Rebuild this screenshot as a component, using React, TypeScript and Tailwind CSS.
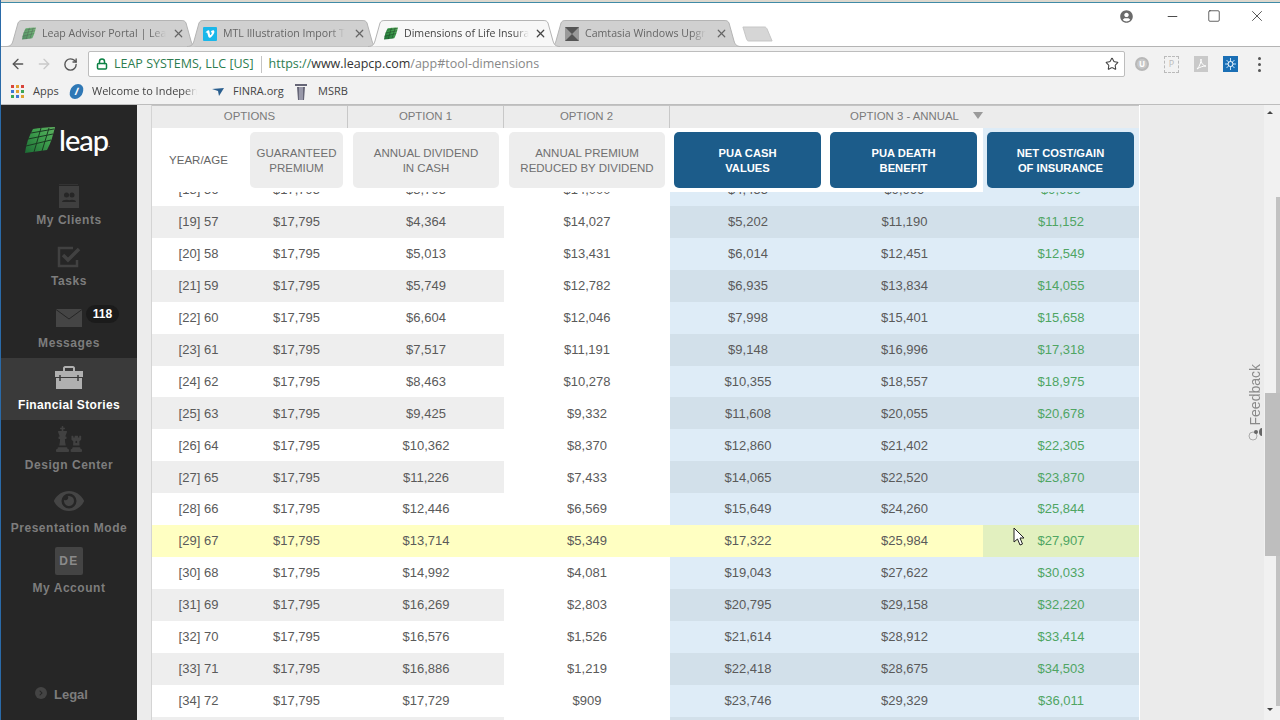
import React from "react";
import { ArrowLeft, ArrowRight, RotateCw, Star, Lock, Minus, Square, X } from "lucide-react";
import { FaChess, FaEye, FaVimeoV, FaChevronRight, FaUserCircle } from "react-icons/fa";

const rows = [
  ["[18] 56", "$17,795", "$3,795", "$14,000", "$4,455", "$9,999", "$9,999"],
  ["[19] 57", "$17,795", "$4,364", "$14,027", "$5,202", "$11,190", "$11,152"],
  ["[20] 58", "$17,795", "$5,013", "$13,431", "$6,014", "$12,451", "$12,549"],
  ["[21] 59", "$17,795", "$5,749", "$12,782", "$6,935", "$13,834", "$14,055"],
  ["[22] 60", "$17,795", "$6,604", "$12,046", "$7,998", "$15,401", "$15,658"],
  ["[23] 61", "$17,795", "$7,517", "$11,191", "$9,148", "$16,996", "$17,318"],
  ["[24] 62", "$17,795", "$8,463", "$10,278", "$10,355", "$18,557", "$18,975"],
  ["[25] 63", "$17,795", "$9,425", "$9,332", "$11,608", "$20,055", "$20,678"],
  ["[26] 64", "$17,795", "$10,362", "$8,370", "$12,860", "$21,402", "$22,305"],
  ["[27] 65", "$17,795", "$11,226", "$7,433", "$14,065", "$22,520", "$23,870"],
  ["[28] 66", "$17,795", "$12,446", "$6,569", "$15,649", "$24,260", "$25,844"],
  ["[29] 67", "$17,795", "$13,714", "$5,349", "$17,322", "$25,984", "$27,907"],
  ["[30] 68", "$17,795", "$14,992", "$4,081", "$19,043", "$27,622", "$30,033"],
  ["[31] 69", "$17,795", "$16,269", "$2,803", "$20,795", "$29,158", "$32,220"],
  ["[32] 70", "$17,795", "$16,576", "$1,526", "$21,614", "$28,912", "$33,414"],
  ["[33] 71", "$17,795", "$16,886", "$1,219", "$22,418", "$28,675", "$34,503"],
  ["[34] 72", "$17,795", "$17,729", "$909", "$23,746", "$29,329", "$36,011"],
  ["", "", "", "", "", "", ""],
];

const columns = "grid grid-cols-[93px_103px_156px_166px_156px_157px_156px]";

// green leaf mark used by the logo and the tab favicons
const Leaf = ({ className }: { className: string }) => (
  <svg viewBox="0 0 30 26" className={className}>
    <defs>
      <linearGradient id="leaf" x1="0" y1="1" x2="1" y2="0">
        <stop offset="0" stopColor="#1c6b34" />
        <stop offset="0.6" stopColor="#3fa04e" />
        <stop offset="1" stopColor="#5fb060" />
      </linearGradient>
    </defs>
    <path d="M8 2 C14 1 22 0 30 0 C28 8 26 16 22 23 C15 24 7 25 0 26 C1 17 4 9 8 2Z" fill="url(#leaf)" />
    <path d="M1 19 L26 13 M3 12 L28 7 M6 6 L29 2 M9 25 L16 1 M17 24 L24 1" stroke="#1a3a22" strokeWidth="1" fill="none" />
  </svg>
);

const CamtasiaIcon = () => (
  <svg viewBox="0 0 14 14" className="w-[14px] h-[14px] shrink-0">
    <rect width="14" height="14" fill="#555" />
    <path d="M0 0 L7 7 L0 14Z M14 0 L7 7 L14 14Z" fill="#999" />
  </svg>
);

const tabs = [
  { title: "Leap Advisor Portal | Lea", icon: <Leaf className="w-[14px] h-[13px] shrink-0 opacity-70" /> },
  {
    title: "MTL Illustration Import T",
    icon: (
      <span className="w-[14px] h-[14px] shrink-0 bg-[#1ab7ea] rounded-[1px] flex items-center justify-center text-white">
        <FaVimeoV size={10} />
      </span>
    ),
  },
  { title: "Dimensions of Life Insura", icon: <Leaf className="w-[14px] h-[13px] shrink-0" />, active: true },
  { title: "Camtasia Windows Upgr", icon: <CamtasiaIcon /> },
];

const ChromeTab = ({ title, icon, active }: { title: string; icon: React.ReactNode; active?: boolean }) => (
  <div className={`relative w-[192px] h-[27px] -mr-[11px] -mb-px flex items-center pl-[16px] pr-[13px] pt-[1px] ${active ? "z-10" : ""}`}>
    <svg viewBox="0 0 192 27" className="absolute inset-0 w-full h-full" preserveAspectRatio="none">
      <path
        d="M0 26.5 C5 26.5 6 24 7 21 L12 3 C13 1 14 .5 17 .5 L175 .5 C178 .5 179 1 180 3 L185 21 C186 24 187 26.5 192 26.5"
        fill={active ? "#f7f7f7" : "#d0d0d0"}
        stroke="#b4b4b4"
      />
    </svg>
    <div className="relative flex items-center w-full">
      {icon}
      <span
        className={`ml-[6px] whitespace-nowrap text-[10.6px] [mask-image:linear-gradient(to_right,black_88%,transparent)] ${
          active ? "text-[#444]" : "text-[#666]"
        }`}
      >
        {title}
      </span>
      <X size={13} strokeWidth={2.2} className={`ml-auto shrink-0 ${active ? "text-[#444]" : "text-[#666]"}`} />
    </div>
  </div>
);

const TabStrip = () => (
  <div className="h-[44px] bg-white border-b border-[#b4b4b4] flex justify-between pl-[5px] pr-[14px]">
    <div className="flex items-end">
      {tabs.map((t) => (
        <ChromeTab key={t.title} {...t} />
      ))}
      <svg viewBox="0 0 34 16" className="ml-[12px] mb-[4px] w-[31px] h-[16px]" preserveAspectRatio="none">
        <path d="M1 1 L25 1 C26 1 27 2 27.500 3 L33 15 L7 15 C6 15 5.500 14 5 13Z" fill="#d6d6d6" stroke="#c4c4c4" />
      </svg>
    </div>
    <div className="flex items-start pt-[5px] text-[#555]">
      <FaUserCircle size={13} className="mt-[2px] text-[#6a6a6a]" />
      <Minus size={15} strokeWidth={1.3} className="ml-[32px] mt-[1px] text-[#222]" />
      <Square size={14} strokeWidth={1.2} className="ml-[27px] mt-[1px] text-[#222]" />
      <X size={18} strokeWidth={1} className="ml-[27px] -mt-px text-[#222]" />
    </div>
  </div>
);

const Toolbar = () => (
  <div className="h-[33px] bg-[#f2f2f2] flex items-center pl-[9px] pr-[10px] pt-[1px] text-[#555]">
    <ArrowLeft size={16} strokeWidth={2} className="text-[#555]" />
    <ArrowRight size={16} strokeWidth={2} className="ml-[10px] text-[#c9c9c9]" />
    <RotateCw size={15} strokeWidth={2.2} className="ml-[11px] text-[#555]" />
    <div className="ml-[10px] w-[1037px] h-[26px] bg-white border border-[#bdbdbd] rounded-[2px] flex items-center pl-[7px] pr-[5px] text-[12.5px]">
      <Lock size={12} strokeWidth={3} className="text-[#0b8043]" />
      <span className="ml-[6px] text-[#2e7d4f]">LEAP SYSTEMS, LLC [US]</span>
      <span className="mx-[7px] w-px h-[17px] bg-[#c4c4c4]" />
      <span className="text-[#2e7d4f]">https://</span>
      <span className="text-[#333]">www.leapcp.com</span>
      <span className="text-[#888]">/app#tool-dimensions</span>
      <Star size={14} strokeWidth={1.8} className="ml-auto text-[#444]" />
    </div>
    <span className="ml-[10px] w-[14px] h-[14px] rounded-full bg-[#c8c8c8] border-[2px] border-[#b8b8b8] text-white text-[8px] font-bold flex items-center justify-center">
      U
    </span>
    <span className="ml-[15px] w-[15px] h-[17px] border border-dashed border-[#bbb] text-[#bbb] text-[9px] flex items-center justify-center">
      P
    </span>
    <svg viewBox="0 0 14 16" className="ml-[15px] w-[14px] h-[16px]">
      <rect width="14" height="16" fill="#c9c9c9" />
      <path d="M3 13 C6 10 7 6 7 3 C7 7 9 10 12 10 C9 10 6 11 3 13Z" fill="none" stroke="#fff" />
    </svg>
    <svg viewBox="0 0 15 16" className="ml-[15px] w-[15px] h-[16px]">
      <rect width="15" height="16" fill="#1a6fb5" />
      <g stroke="#bfe3ff" strokeWidth="1">
        <path d="M7.500 2 V14 M2 8 H13 M3.500 4 L11.500 12 M11.500 4 L3.500 12" />
      </g>
      <circle cx="7.500" cy="8" r="2.500" fill="#1a6fb5" stroke="#fff" />
    </svg>
    <div className="ml-[20px] flex flex-col gap-[3px]">
      <span className="w-[3px] h-[3px] rounded-full bg-[#555]" />
      <span className="w-[3px] h-[3px] rounded-full bg-[#555]" />
      <span className="w-[3px] h-[3px] rounded-full bg-[#555]" />
    </div>
  </div>
);

const AppsIcon = () => (
  <div className="grid grid-cols-3 gap-[2px] w-[13px]">
    {["bg-[#d9453a]", "bg-[#e0a030]", "bg-[#d9453a]", "bg-[#3c78d8]", "bg-[#e0a030]", "bg-[#3aa757]", "bg-[#3aa757]", "bg-[#3c78d8]", "bg-[#e0a030]"].map((c, i) => (
      <span key={i} className={`w-[3px] h-[3px] ${c}`} />
    ))}
  </div>
);

const Bookmarks = () => (
  <div className="h-[25px] bg-[#f2f2f2] border-b border-[#bdbdbd] flex items-center pl-[10px] pb-[1px] text-[11px] text-[#444]">
    <AppsIcon />
    <span className="ml-[9px] w-[25px]">Apps</span>
    <span className="ml-[12px] w-[13px] h-[15px] rounded-full bg-[#2f78b5] text-white text-[10px] italic font-bold flex items-center justify-center -skew-x-12">
      I
    </span>
    <span className="ml-[9px] w-[105px] whitespace-nowrap [mask-image:linear-gradient(to_right,black_88%,transparent)]">
      Welcome to Indepen
    </span>
    <svg viewBox="0 0 12 8" className="ml-[15px] w-[12px] h-[8px]">
      <path d="M0 1 L12 0 L7 8 L6 3Z" fill="#2a5f8f" />
    </svg>
    <span className="ml-[9px] w-[50px] whitespace-nowrap">FINRA.org</span>
    <svg viewBox="0 0 12 16" className="ml-[12px] w-[12px] h-[16px]">
      <path d="M0 0 H12 V2 H0Z M2 3 H10 L9 16 H3Z" fill="#667" />
      <path d="M5 3 V16 M7 3 V16" stroke="#ccd" />
    </svg>
    <span className="ml-[11px]">MSRB</span>
  </div>
);

const ClientsIcon = () => (
  <svg viewBox="0 0 22 24" className="w-[22px] h-[24px]">
    <path d="M1 0 H20 V1 H1Z" fill="#333" />
    <rect x="1" y="2" width="20" height="22" fill="#3f3f3f" />
    <circle cx="8.500" cy="11" r="2.500" fill="#262626" />
    <circle cx="14" cy="11" r="2.500" fill="#262626" />
    <path d="M4 18 C4 15 13 15 13 18Z M10 18 C10 15 18 15 18 18Z" fill="#262626" />
  </svg>
);

const TasksIcon = () => (
  <svg viewBox="0 0 24 22" className="w-[24px] h-[22px]" fill="none" stroke="#414141">
    <path d="M20 14 V20 H2 V2 H16" strokeWidth="2.500" />
    <path d="M6 9 L11 14 L22 3" strokeWidth="3.500" />
  </svg>
);

const MailIcon = () => (
  <svg viewBox="0 0 26 18" className="w-[26px] h-[18px]">
    <rect width="26" height="18" fill="#454545" />
    <path d="M0 .5 L13 10 L26 .5" fill="none" stroke="#262626" />
  </svg>
);

const BriefcaseIcon = () => (
  <svg viewBox="0 0 30 23" className="w-[30px] h-[23px]">
    <path d="M9 5 V2 C9 1 10 0 11 0 H19 C20 0 21 1 21 2 V5 H19 V2 H11 V5Z" fill="#b0b0b0" />
    <path d="M1 5 H29 V11 H1Z M2 12 H28 V23 H2Z" fill="#b0b0b0" />
    <path d="M6 9 V15 M24 9 V15" stroke="#3a3a3a" strokeWidth="1.500" />
  </svg>
);

const navItems: { label: string; icon: React.ReactNode; height: string; iconBox: string; active?: boolean; badge?: string }[] = [
  { label: "My Clients", icon: <ClientsIcon />, height: "h-[61px]", iconBox: "h-[39px] pt-[6px]" },
  { label: "Tasks", icon: <TasksIcon />, height: "h-[62px]", iconBox: "h-[39px] pt-[6px]" },
  { label: "Messages", icon: <MailIcon />, height: "h-[62px]", iconBox: "h-[39px] pt-[4px]", badge: "118" },
  { label: "Financial Stories", icon: <BriefcaseIcon />, height: "h-[62px]", iconBox: "h-[39px]", active: true },
  { label: "Design Center", icon: <FaChess size={26} className="text-[#414141]" />, height: "h-[61px]", iconBox: "h-[37px]" },
  { label: "Presentation Mode", icon: <FaEye size={30} className="text-[#454545]" />, height: "h-[60px]", iconBox: "h-[39px]" },
  {
    label: "My Account",
    icon: (
      <span className="w-[28px] h-[28px] rounded-[2px] bg-[#444] text-[#8a8a8a] text-[12px] font-bold tracking-[1.5px] flex items-center justify-center">
        DE
      </span>
    ),
    height: "h-[60px]",
    iconBox: "h-[39px]",
  },
];

const Sidebar = () => (
  <aside className="w-[136px] shrink-0 bg-[#262626] flex flex-col">
    <div className="h-[68px] pt-[22px] pl-[24px] flex items-start">
      <Leaf className="w-[30px] h-[26px]" />
      <span className="ml-[4px] -mt-[9px] text-white text-[29px] font-medium font-['Lato',sans-serif] tracking-[-1px]">leap</span>
      <span className="text-white text-[8px] mt-[12px]">.</span>
    </div>
    {navItems.map((n) => (
      <div key={n.label} className={`relative ${n.height} flex flex-col items-center ${n.active ? "bg-[#3a3a3a]" : ""}`}>
        <div className={`${n.iconBox} flex items-center justify-center`}>{n.icon}</div>
        <span
          className={`text-[12px] leading-[16px] font-bold whitespace-nowrap ${
            n.active ? "text-white tracking-[0.35px]" : "text-[#7d7d7d] tracking-[0.55px]"
          }`}
        >
          {n.label}
        </span>
        {n.badge && (
          <span className="absolute left-[85px] top-[9px] w-[33px] h-[18px] rounded-full bg-[#1b1b1b] text-white text-[12px] font-bold flex items-center justify-center">
            {n.badge}
          </span>
        )}
      </div>
    ))}
    <div className="mt-auto h-[34px] pl-[34px] flex items-start">
      <span className="mt-[1px] w-[12px] h-[12px] rounded-full bg-[#444] text-[#262626] flex items-center justify-center">
        <FaChevronRight size={6} />
      </span>
      <span className="ml-[7px] -mt-px text-[13px] font-bold text-[#7d7d7d]">Legal</span>
    </div>
  </aside>
);

const GroupHeader = () => (
  <div className={`${columns} h-[23px] bg-[#ececec] border-t border-[#c4c4c4] text-[11.4px] text-[#7a7a7a]`}>
    <div className="col-span-2 flex items-center justify-center border-r border-[#c8c8c8] pb-[1px]">OPTIONS</div>
    <div className="flex items-center justify-center border-r border-[#c8c8c8] pb-[1px]">OPTION 1</div>
    <div className="flex items-center justify-center border-r border-[#c8c8c8] pb-[1px]">OPTION 2</div>
    <div className="col-span-3 flex items-center justify-center pb-[1px]">
      <span className="relative">
        OPTION 3 - ANNUAL
        <svg viewBox="0 0 10 7" className="absolute left-[123px] top-[4px] w-[10px] h-[7px]">
          <path d="M0 0 H10 L5 7Z" fill="#9a9a9a" />
        </svg>
      </span>
    </div>
  </div>
);

const grayHead = "mx-[5px] h-[56px] pt-[2px] bg-[#ededed] rounded-[5px] flex items-center justify-center text-center text-[11.5px] leading-[15px] text-[#707070]";
const blueHead = "h-[56px] pt-[2px] bg-[#1c5c8a] rounded-[5px] flex items-center justify-center text-center text-[11.2px] leading-[15px] font-bold text-white";

const SubHeader = () => (
  <div className={`${columns} h-[64px] bg-white`}>
    <div className="flex items-center justify-center pt-[2px] text-[11.5px] text-[#666]">YEAR/AGE</div>
    <div className="pt-[4px]">
      <div className={grayHead}>
        GUARANTEED
        <br />
        PREMIUM
      </div>
    </div>
    <div className="pt-[4px]">
      <div className={grayHead}>
        ANNUAL DIVIDEND
        <br />
        IN CASH
      </div>
    </div>
    <div className="pt-[4px]">
      <div className={grayHead}>
        ANNUAL PREMIUM
        <br />
        REDUCED BY DIVIDEND
      </div>
    </div>
    <div className="pt-[4px] pl-[4px] pr-[5px]">
      <div className={blueHead}>
        PUA CASH
        <br />
        VALUES
      </div>
    </div>
    <div className="pt-[4px] pl-[4px] pr-[6px]">
      <div className={blueHead}>
        PUA DEATH
        <br />
        BENEFIT
      </div>
    </div>
    <div className="pt-[4px] pl-[4px] pr-[5px] bg-[#deecf7]">
      <div className={blueHead}>
        NET COST/GAIN
        <br />
        OF INSURANCE
      </div>
    </div>
  </div>
);

const cellBg = (row: number, col: number) => {
  if (row === 11) return col === 6 ? "bg-[#e2f0bf]" : "bg-[#ffffc2]";
  const striped = row % 2 === 1;
  if (col < 3) return striped ? "bg-[#eeeeee]" : "bg-white";
  if (col === 3) return "bg-white";
  return striped ? "bg-[#d2e0ea]" : "bg-[#deecf7]";
};

const TableBody = () => (
  <div className="flex-1 overflow-hidden">
    <div className="-mt-[18px] text-[13px] text-[#5a5a5a]">
      {rows.map((r, i) => (
        <div key={i} className={`${columns} h-[31.93px]`}>
          {r.map((v, c) => (
            <div key={c} className={`flex items-center justify-center ${cellBg(i, c)} ${c === 6 ? "text-[#4fa563]" : ""}`}>
              {v}
            </div>
          ))}
        </div>
      ))}
    </div>
  </div>
);

const FeedbackTab = () => (
  <div className="flex-1 min-w-0 bg-[#ebebeb] border-l border-white flex justify-end pr-[1px]">
    <div className="mt-[259px] h-[82px] flex flex-col items-center">
      <span className="[writing-mode:vertical-rl] rotate-180 text-[14px] leading-[16px] text-[#8a8a8a]">Feedback</span>
      <svg viewBox="0 0 14 14" className="mt-[3px] w-[14px] h-[14px] -rotate-90">
        <circle cx="6" cy="5" r="4" fill="none" stroke="#aaa" />
        <circle cx="10" cy="8" r="2" fill="#666" />
        <path d="M6 14 C6 10 14 10 14 14Z" fill="#666" />
      </svg>
    </div>
  </div>
);

const PageScrollbar = () => (
  <div className="relative w-[16px] shrink-0 bg-[#f1f1f1] flex justify-end">
    <span className="absolute left-[3px] top-[6px] w-0 h-0 border-x-[3px] border-x-transparent border-b-[3px] border-b-[#444]" />
    <span className="absolute right-0 top-[92px] w-[4px] h-[509px] bg-[#c2c2c2]" />
    <span className="absolute left-[1px] right-0 top-[288px] h-[163px] bg-[#bebebe]" />
    <span className="absolute left-[3px] bottom-[9px] w-0 h-0 border-x-[3px] border-x-transparent border-t-[3px] border-t-[#444]" />
  </div>
);

const Cursor = () => (
  <svg viewBox="0 0 12 19" className="absolute left-[1012px] top-[527px] w-[12px] h-[19px]">
    <path d="M1 1 L1 15 L4.500 12 L7 18 L9.500 17 L7 11 L11 11Z" fill="#fff" stroke="#222" strokeWidth="1" />
  </svg>
);

export default function App() {
  return (
    <div className="relative w-[1280px] h-[720px] overflow-hidden flex flex-col bg-white border-l border-[#2a6aa8] font-['Liberation_Sans',Arial,sans-serif]">
      <div className="h-[3px] bg-[#ddd8ce] border-b border-[#3f8aa6]" />
      <div className="font-['Open_Sans',sans-serif]">
        <TabStrip />
        <Toolbar />
        <Bookmarks />
      </div>
      <div className="flex-1 min-h-0 flex">
        <Sidebar />
        <div className="w-[14px] shrink-0 bg-[#ececec]" />
        <main className="w-[988px] shrink-0 border-l border-[#d4d4d4] flex flex-col bg-white">
          <GroupHeader />
          <SubHeader />
          <TableBody />
        </main>
        <FeedbackTab />
        <PageScrollbar />
      </div>
      <Cursor />
    </div>
  );
}
